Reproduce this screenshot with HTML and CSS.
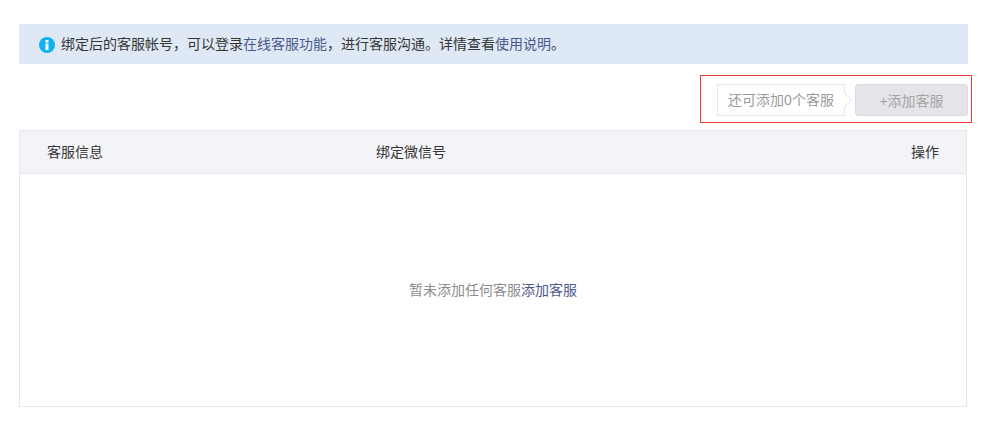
FILE: index.html
```html
<!DOCTYPE html>
<html lang="zh-CN">
<head>
  <meta charset="UTF-8" />
  <title>客服</title>
  <link rel="stylesheet" href="styles.css">
</head>
<body>
<div class="page">
  <div class="notice">
    <svg class="notice-icon" width="16" height="16" viewBox="0 0 16 16">
      <circle cx="8" cy="8" r="8" fill="#10b2f0"/>
      <rect x="6.5" y="3" width="3" height="2.5" fill="#fff"/>
      <rect x="6.5" y="6.5" width="3" height="6.5" fill="#fff"/>
    </svg>
    <p>绑定后的客服帐号，可以登录<a href="#">在线客服功能</a>，进行客服沟通。详情查看<a href="#">使用说明</a>。</p>
  </div>

  <div class="toolbar">
    <div class="outline"></div>
    <div class="tip">还可添加0个客服</div>
    <button class="add-btn" disabled>+添加客服</button>
  </div>

  <div class="table">
    <div class="table-head">
      <span class="col-info">客服信息</span>
      <span class="col-wx">绑定微信号</span>
      <span class="col-op">操作</span>
    </div>
    <div class="table-empty">暂未添加任何客服<a href="#">添加客服</a></div>
  </div>
</div>
</body>
</html>
```

FILE: styles.css
```css
body {
  margin: 0;
  background: #fff;
  font-family: "Liberation Sans", "Noto Sans CJK SC", sans-serif;
  font-size: 14px;
  color: #353535;
}

a {
  color: #4a5a8c;
  text-decoration: none;
}

.page {
  padding: 24px 29px 18px 19px;
}

.notice {
  display: flex;
  align-items: center;
  height: 40px;
  padding-left: 20px;
  background: #dfe8f5;
}

.notice p {
  margin: -2px 0 0 6px;
}

.notice-icon {
  flex: none;
  margin-top: 2px;
}

.toolbar {
  position: relative;
  display: flex;
  justify-content: flex-end;
  margin-top: 20px;
}

.outline {
  position: absolute;
  top: -9px;
  right: -4px;
  width: 270px;
  height: 46px;
  border: 1px solid #f23a3a;
}

.tip {
  position: relative;
  box-sizing: border-box;
  height: 32px;
  width: 128px;
  line-height: 30px;
  text-align: center;
  border: 1px solid #e7e7eb;
  color: #9a9a9a;
}

.tip::after {
  content: "";
  position: absolute;
  top: 10px;
  right: -6px;
  width: 9px;
  height: 9px;
  background: #fff;
  border-top: 1px solid #eeeef2;
  border-right: 1px solid #eeeef2;
  transform: rotate(45deg);
}

.add-btn {
  box-sizing: border-box;
  width: 113px;
  height: 32px;
  margin-left: 10px;
  padding: 0;
  border: 1px solid #dadbe0;
  border-radius: 3px;
  background: #e4e4e9;
  color: #a3a3a3;
  font: inherit;
}

.table {
  box-sizing: border-box;
  width: 948px;
  height: 277px;
  margin-top: 14px;
  border: 1px solid #e7e7eb;
}

.table-head {
  display: flex;
  align-items: center;
  height: 40px;
  padding: 0 27px 2px;
  background: #f3f4f8;
  border-bottom: 1px solid #e7e7eb;
}

.col-info {
  width: 329px;
}

.col-op {
  margin-left: auto;
}

.table-empty {
  padding-top: 107px;
  line-height: 18px;
  text-align: center;
  color: #8d8d8d;
}
```
